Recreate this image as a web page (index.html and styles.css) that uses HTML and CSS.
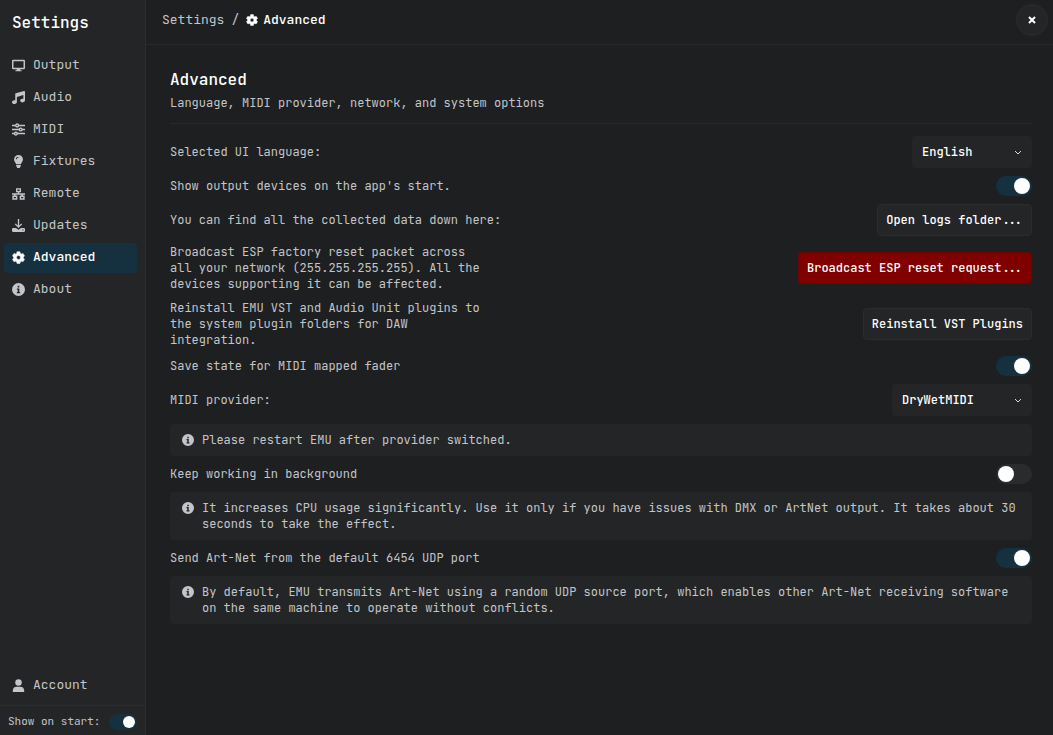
FILE: index.html
```
<!DOCTYPE html>
<html lang="en">
<head>
    <meta charset="UTF-8">
    <title>Settings</title>
    <link rel="stylesheet" href="styles.css">
</head>
<body>
<svg class="sprite" aria-hidden="true">
    <symbol id="gear" viewBox="0 0 16 16">
        <path fill-rule="evenodd" d="M6.2 0.8h3.6l.5 2.2 1.2.7 2.1-.7 1.8 3.1-1.6 1.5v1l1.6 1.5-1.8 3.1-2.1-.7-1.2.7-.5 2.2H6.200l-.5-2.200-1.200-.7-2.100.7L.6 10.100l1.600-1.500v-1L.6 6.100 2.400 3l2.100.7L5.700 3zM8 5.500a2.500 2.500 0 1 0 0 5 2.500 2.500 0 0 0 0-5z" stroke="currentColor" stroke-linejoin="round" stroke-width=".6"/>
    </symbol>
    <symbol id="info" viewBox="0 0 16 16">
        <path fill-rule="evenodd" d="M8 0a8 8 0 1 0 0 16A8 8 0 0 0 8 0zM7 3.500h2v2H7zM6 6.700h3v4.300h1v1.500H6V11h1V8.200H6z"/>
    </symbol>
</svg>
<div class="app">
    <aside class="sidebar">
        <h2>Settings</h2>
        <nav class="menu">
            <a href="#output">
                <svg class="icon" viewBox="0 0 16 16"><path fill-rule="evenodd" d="M1.500 1h13A1.500 1.500 0 0 1 16 2.500v8.500a1.500 1.500 0 0 1-1.500 1.500H10l.4 1.300h1.400V15H4.200v-1.200h1.400L6 12.500H1.500A1.500 1.500 0 0 1 0 11V2.500A1.500 1.500 0 0 1 1.500 1zm.3 1.800v7.900h12.400V2.800z"/></svg>
                Output
            </a>
            <a href="#audio">
                <svg class="icon" viewBox="0 0 16 16"><path d="M16 1v10.500c0 1.400-1.300 2.500-3 2.500s-3-.9-3-2.200 1.300-2.300 3-2.300c.4 0 .7 0 1 .1V5L6 7.400v6.100C6 14.900 4.700 16 3 16s-3-.9-3-2.200 1.300-2.300 3-2.300c.4 0 .7 0 1 .1V3.800c0-.5.3-.8.7-.9l10-2.900c.7-.2 1.300.3 1.300 1z"/></svg>
                Audio
            </a>
            <a href="#midi">
                <svg class="icon" viewBox="0 0 16 16"><g fill="none" stroke="currentColor" stroke-width="1.800"><path d="M0 3h4.500M8 3h8M0 8h9M12.500 8H16M0 13h3M6.500 13H16"/><circle cx="6.300" cy="3" r="1.700"/><circle cx="10.700" cy="8" r="1.700"/><circle cx="4.800" cy="13" r="1.700"/></g></svg>
                MIDI
            </a>
            <a href="#fixtures">
                <svg class="icon" viewBox="0 0 16 16"><path fill-rule="evenodd" d="M8 0a5.500 5.500 0 0 1 5.500 5.500c0 2.500-2.100 3.600-2.500 6.000H5C4.600 9.100 2.500 8 2.500 5.500A5.500 5.500 0 0 1 8 0zm0 2a3.300 3.300 0 0 0-3.300 3.300h1.100A2.200 2.200 0 0 1 8 3.100zM5.200 12.200h5.600v1.400L9.500 16h-3l-1.300-2.400z"/></svg>
                Fixtures
            </a>
            <a href="#remote">
                <svg class="icon" viewBox="0 0 16 16"><g fill="none" stroke="currentColor" stroke-width="1.800"><path d="M5.800 2.300h4.400v3.400H5.800zM1.300 11.300h4.400v3.400H1.300zM10.300 11.300h4.400v3.400h-4.400zM0 8.500h16M8 5.700v2.800M3.500 8.500v2.800M12.500 8.500v2.800"/></g></svg>
                Remote
            </a>
            <a href="#updates">
                <svg class="icon" viewBox="0 0 16 16"><path d="M8 0v9.500M4 6l4 4 4-4" fill="none" stroke="currentColor" stroke-width="1.700"/><path fill-rule="evenodd" d="M1.500 11h3.400L8 13.200l3.100-2.200h3.400a1.500 1.500 0 0 1 1.500 1.500v2a1.500 1.500 0 0 1-1.500 1.500h-13A1.500 1.500 0 0 1 0 14.500v-2A1.500 1.500 0 0 1 1.500 11zm11.200 1.800v1.400h1.400v-1.400z"/></svg>
                Updates
            </a>
            <a href="#advanced" class="active">
                <svg class="icon"><use href="#gear"/></svg>
                Advanced
            </a>
            <a href="#about">
                <svg class="icon"><use href="#info"/></svg>
                About
            </a>
        </nav>
        <nav class="menu menu-bottom">
            <a href="#account">
                <svg class="icon" viewBox="0 0 16 16"><circle cx="8" cy="4.200" r="4"/><path d="M1 16v-2c0-2.800 2-4.600 4.600-4.600h4.800C13 9.400 15 11.200 15 14v2z"/></svg>
                Account
            </a>
        </nav>
        <div class="on-start">
            <label for="show-start">Show on start:</label>
            <input type="checkbox" class="toggle small" id="show-start" checked>
        </div>
    </aside>

    <main class="main">
        <header class="topbar">
            <div class="crumbs">
                <a href="#settings">Settings</a>
                <span>/</span>
                <strong><svg class="icon"><use href="#gear"/></svg>Advanced</strong>
            </div>
            <button class="close" aria-label="Close">
                <svg viewBox="0 0 8 8"><path d="M1 1l6 6M7 1L1 7"/></svg>
            </button>
        </header>

        <section class="content">
            <div class="heading">
                <h1>Advanced</h1>
                <p>Language, MIDI provider, network, and system options</p>
            </div>

            <div class="row">
                <label for="language">Selected UI language:</label>
                <div class="select language">
                    <select id="language">
                        <option>English</option>
                    </select>
                    <svg viewBox="0 0 8 8"><path d="M1 2l3 3 3-3"/></svg>
                </div>
            </div>
            <div class="row">
                <label for="show-devices">Show output devices on the app's start.</label>
                <input type="checkbox" class="toggle" id="show-devices" checked>
            </div>
            <div class="row">
                <p>You can find all the collected data down here:</p>
                <button class="btn">Open logs folder...</button>
            </div>
            <div class="row">
                <p class="long">Broadcast ESP factory reset packet across all your network (255.255.255.255). All the devices supporting it can be affected.</p>
                <button class="btn danger">Broadcast ESP reset request...</button>
            </div>
            <div class="row">
                <p class="long">Reinstall EMU VST and Audio Unit plugins to the system plugin folders for DAW integration.</p>
                <button class="btn">Reinstall VST Plugins</button>
            </div>
            <div class="row">
                <label for="save-state">Save state for MIDI mapped fader</label>
                <input type="checkbox" class="toggle" id="save-state" checked>
            </div>
            <div class="row">
                <label for="provider">MIDI provider:</label>
                <div class="select provider">
                    <select id="provider">
                        <option>DryWetMIDI</option>
                    </select>
                    <svg viewBox="0 0 8 8"><path d="M1 2l3 3 3-3"/></svg>
                </div>
            </div>
            <div class="note">
                <svg class="icon"><use href="#info"/></svg>
                <p>Please restart EMU after provider switched.</p>
            </div>
            <div class="row">
                <label for="background">Keep working in background</label>
                <input type="checkbox" class="toggle" id="background">
            </div>
            <div class="note">
                <svg class="icon"><use href="#info"/></svg>
                <p>It increases CPU usage significantly. Use it only if you have issues with DMX or ArtNet output. It takes about 30 seconds to take the effect.</p>
            </div>
            <div class="row">
                <label for="artnet">Send Art-Net from the default 6454 UDP port</label>
                <input type="checkbox" class="toggle" id="artnet" checked>
            </div>
            <div class="note">
                <svg class="icon"><use href="#info"/></svg>
                <p>By default, EMU transmits Art-Net using a random UDP source port, which enables other Art-Net receiving software on the same machine to operate without conflicts.</p>
            </div>
        </section>
    </main>
</div>
</body>
</html>
```
FILE: styles.css
```
* {
    margin: 0;
    padding: 0;
    box-sizing: border-box;
}

body {
    background: #1d1f20;
    color: #c4c5ca;
    font: 12px/16px "JetBrains Mono", "DejaVu Sans Mono", monospace;
}

a {
    color: inherit;
    text-decoration: none;
}

button,
select {
    font: inherit;
    font-weight: 500;
    color: #fff;
}

svg {
    flex: none;
    fill: currentColor;
}

.sprite {
    position: absolute;
    width: 0;
    height: 0;
}

.icon {
    width: 13px;
    height: 13px;
}

.app {
    display: flex;
    min-height: 100vh;
}

/* sidebar */
.sidebar {
    display: flex;
    flex-direction: column;
    width: 146px;
    flex: none;
    background: #232527;
    border-right: 1px solid #2a2c2e;
}

.sidebar h2 {
    padding: 13px 12px 18px;
    font-size: 16px;
    line-height: 20px;
    font-weight: 500;
    color: #fff;
}

.menu {
    display: flex;
    flex-direction: column;
    gap: 2px;
    padding: 0 8px 0 4px;
}

.menu a {
    display: flex;
    align-items: center;
    gap: 8px;
    height: 30px;
    padding: 0 8px 2px;
    border-radius: 4px;
    font-size: 13px;
}

.menu .active {
    background: #15313f;
    color: #fff;
    font-weight: 500;
}

.menu-bottom {
    margin-top: auto;
    padding-bottom: 4px;
}

.on-start {
    display: flex;
    align-items: flex-start;
    justify-content: space-between;
    padding: 8px 8px 5px;
    border-top: 1px solid #2a2c2e;
    font-size: 11px;
    line-height: 14px;
}

/* header */
.main {
    flex: 1;
    min-width: 0;
}

.topbar {
    display: flex;
    justify-content: space-between;
    padding: 4px 5px 8px 16px;
    border-bottom: 1px solid #27292b;
}

.crumbs {
    display: flex;
    align-items: center;
    gap: 7px;
    height: 31px;
    font-size: 13px;
}

.crumbs strong {
    display: flex;
    align-items: center;
    gap: 5px;
    font-weight: 500;
    color: #fff;
}

.crumbs .icon {
    width: 12px;
    height: 12px;
}

.close {
    display: flex;
    align-items: center;
    justify-content: center;
    width: 32px;
    height: 32px;
    background: #232527;
    border: 1px solid #2a2c2e;
    border-radius: 50%;
}

.close svg {
    width: 8px;
    height: 8px;
    stroke: #fff;
    stroke-width: 2;
}

/* content */
.content {
    display: flex;
    flex-direction: column;
    gap: 8px;
    padding: 25px 21px 24px 24px;
}

.heading {
    padding-bottom: 12px;
    margin-bottom: 4px;
    border-bottom: 1px solid #27292b;
}

.heading h1 {
    margin-bottom: 5px;
    font-size: 16px;
    line-height: 20px;
    font-weight: 500;
    color: #fff;
}

.row {
    display: flex;
    align-items: center;
    justify-content: space-between;
    gap: 16px;
}

.long {
    max-width: 320px;
}

.btn {
    height: 32px;
    padding: 0 8px;
    background: #232527;
    border: 1px solid #2a2c2e;
    border-radius: 4px;
    white-space: nowrap;
}

.danger {
    background: #800000;
    border-color: #6c0406;
}

.select {
    position: relative;
}

.language {
    width: 120px;
}

.provider {
    width: 140px;
}

.select select {
    appearance: none;
    width: 100%;
    height: 32px;
    padding: 0 10px;
    background: #232527;
    border: 0;
    border-radius: 4px;
}

.select svg {
    position: absolute;
    right: 10px;
    top: 13px;
    width: 8px;
    height: 8px;
    fill: none;
    stroke: #d8d8da;
    pointer-events: none;
}

.toggle {
    appearance: none;
    display: flex;
    flex: none;
    width: 36px;
    height: 20px;
    padding: 2px;
    background: #292b2d;
    border-radius: 10px;
}

.toggle::before {
    content: "";
    width: 16px;
    height: 16px;
    background: #fff;
    border-radius: 50%;
}

.toggle:checked {
    justify-content: flex-end;
    background: #15313f;
}

.small {
    width: 28px;
    height: 16px;
}

.small::before {
    width: 12px;
    height: 12px;
}

.note {
    display: flex;
    gap: 8px;
    padding: 8px 12px;
    background: #232527;
    border-radius: 4px;
}

.note .icon {
    width: 12px;
    height: 12px;
    margin-top: 2px;
}
```
